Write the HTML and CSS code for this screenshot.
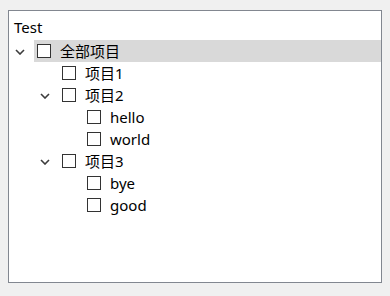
FILE: index.html
```html
<!DOCTYPE html>
<html lang="zh">
<head>
<meta charset="utf-8">
<link rel="stylesheet" href="styles.css">
</head>
<body>
<div class="tree">
  <div class="header">Test</div>
  <div class="row">
    <span class="arrow"><svg width="10" height="6" viewBox="0 0 10 6"><path d="M1 1 L5 5 L9 1" fill="none" stroke="#3c3c3c" stroke-width="1.6"/></svg></span>
    <span class="item selected"><span class="cb"></span><span class="label">全部项目</span></span>
  </div>
  <div class="row l1">
    <span class="arrow"></span>
    <span class="item"><span class="cb"></span><span class="label">项目1</span></span>
  </div>
  <div class="row l1">
    <span class="arrow"><svg width="10" height="6" viewBox="0 0 10 6"><path d="M1 1 L5 5 L9 1" fill="none" stroke="#3c3c3c" stroke-width="1.6"/></svg></span>
    <span class="item"><span class="cb"></span><span class="label">项目2</span></span>
  </div>
  <div class="row l2">
    <span class="arrow"></span>
    <span class="item"><span class="cb"></span><span class="label">hello</span></span>
  </div>
  <div class="row l2">
    <span class="arrow"></span>
    <span class="item"><span class="cb"></span><span class="label">world</span></span>
  </div>
  <div class="row l1">
    <span class="arrow"><svg width="10" height="6" viewBox="0 0 10 6"><path d="M1 1 L5 5 L9 1" fill="none" stroke="#3c3c3c" stroke-width="1.6"/></svg></span>
    <span class="item"><span class="cb"></span><span class="label">项目3</span></span>
  </div>
  <div class="row l2">
    <span class="arrow"></span>
    <span class="item"><span class="cb"></span><span class="label">bye</span></span>
  </div>
  <div class="row l2">
    <span class="arrow"></span>
    <span class="item"><span class="cb"></span><span class="label">good</span></span>
  </div>
</div>
</body>
</html>
```
FILE: styles.css
```css
html, body {
  margin: 0;
  padding: 0;
  background: #f0f0f0;
}
body {
  padding: 10px 8px 0 8px;
  font-family: "Noto Sans", "Noto Sans CJK SC", sans-serif;
  font-size: 15px;
  color: #000;
}
.tree {
  box-sizing: border-box;
  width: 374px;
  height: 273px;
  border: 1px solid #828790;
  background: #fff;
}
.header {
  height: 29px;
  padding-left: 5px;
  line-height: 32px;
}
.row {
  display: flex;
  height: 22px;
  align-items: stretch;
}
.row.l1 { padding-left: 25px; }
.row.l2 { padding-left: 50px; }
.arrow {
  width: 25px;
  flex: none;
  display: flex;
  align-items: center;
  padding-left: 6px;
  padding-top: 1px;
  box-sizing: border-box;
}
.item {
  flex: 1;
  display: flex;
  align-items: center;
  padding-left: 3px;
}
.item.selected { background: #d9d9d9; }
.cb {
  box-sizing: border-box;
  width: 14px;
  height: 14px;
  border: 1px solid #333;
  background: #fff;
  flex: none;
}
.label {
  margin-left: 9px;
  line-height: 22px;
}
```
